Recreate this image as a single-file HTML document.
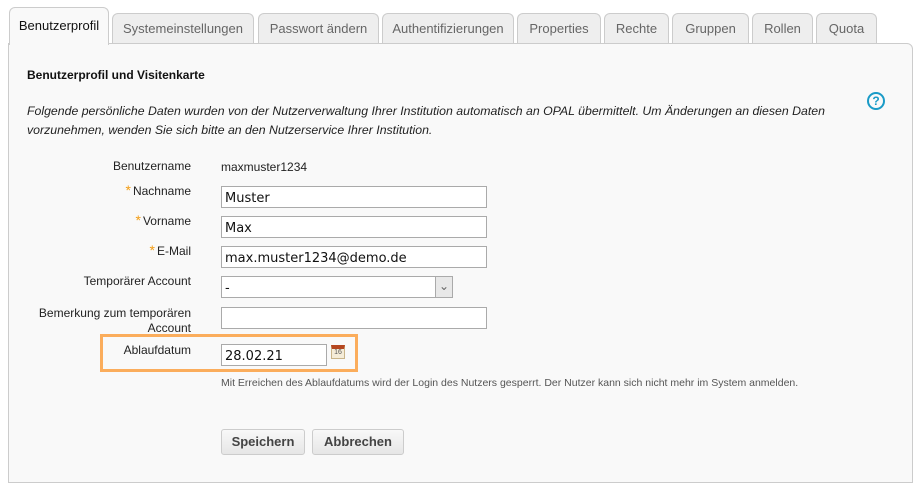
<!DOCTYPE html>
<html><head><meta charset="utf-8"><style>
body{margin:0;width:919px;height:468px;background:#fff;font-family:"Liberation Sans",Arial,sans-serif;font-size:12px;color:#222;position:relative;overflow:hidden}
.a{position:absolute}
.tab{position:absolute;top:13px;height:30px;background:#eee;border:1px solid #ccc;border-bottom:none;border-radius:6px 6px 0 0;color:#666;font-size:13px;line-height:30px;text-align:center;box-sizing:border-box}
.panel{position:absolute;left:8px;top:43px;width:905px;height:440px;background:#f9f9f9;border:1px solid #ccc;border-radius:0 6px 0 0;box-sizing:border-box}
.lbl{position:absolute;right:728px;text-align:right;font-size:12px;color:#222}
.inp{position:absolute;left:221px;width:266px;height:22px;background:#fff;border:1px solid #aaa;box-sizing:border-box;font-family:"DejaVu Sans",Verdana,sans-serif;font-size:13px;line-height:23px;padding-left:3px;color:#111}
.st{color:#f39c12;font-size:14px;margin-right:2px}
.btn{position:absolute;top:429px;height:26px;border:1px solid #ccc;border-radius:3px;background:linear-gradient(#f8f8f8,#e6e6e6);font-weight:bold;font-size:13px;color:#444;line-height:24px;text-align:center;box-sizing:border-box}
</style></head><body>
<div class="panel"></div>
<div class="tab" style="left:9px;top:7px;width:100px;height:38px;background:#f9f9f9;color:#111;line-height:36px;z-index:2">Benutzerprofil</div>
<div class="tab" style="left:112px;width:142px">Systemeinstellungen</div>
<div class="tab" style="left:258px;width:121px">Passwort ändern</div>
<div class="tab" style="left:382px;width:132px">Authentifizierungen</div>
<div class="tab" style="left:517px;width:84px">Properties</div>
<div class="tab" style="left:604px;width:65px">Rechte</div>
<div class="tab" style="left:672px;width:77px">Gruppen</div>
<div class="tab" style="left:752px;width:61px">Rollen</div>
<div class="tab" style="left:816px;width:61px">Quota</div>
<div class="a" style="left:27px;top:68px;font-weight:bold;font-size:12px;color:#111">Benutzerprofil und Visitenkarte</div>
<div class="a" style="left:867px;top:92px;width:14px;height:14px;border:2px solid #1a9bc7;border-radius:50%;color:#1a9bc7;font-weight:bold;font-size:12px;line-height:14px;text-align:center">?</div>
<div class="a" style="left:27px;top:102px;font-style:italic;font-size:12.3px;line-height:19px;color:#222;width:840px">Folgende persönliche Daten wurden von der Nutzerverwaltung Ihrer Institution automatisch an OPAL übermittelt. Um Änderungen an diesen Daten vorzunehmen, wenden Sie sich bitte an den Nutzerservice Ihrer Institution.</div>
<div class="lbl" style="top:159px">Benutzername</div>
<div class="a" style="left:221px;top:160px;font-size:12px">maxmuster1234</div>
<div class="lbl" style="top:182px"><span class="st">*</span>Nachname</div>
<div class="inp" style="top:186px">Muster</div>
<div class="lbl" style="top:212px"><span class="st">*</span>Vorname</div>
<div class="inp" style="top:216px">Max</div>
<div class="lbl" style="top:242px"><span class="st">*</span>E-Mail</div>
<div class="inp" style="top:246px">max.muster1234@demo.de</div>
<div class="lbl" style="top:274px">Temporärer Account</div>
<div class="inp" style="top:276px;width:232px">-<div class="a" style="right:0;top:0;width:16px;height:20px;background:#e8e8e8;border-left:1px solid #aaa;color:#666;font-size:12px;text-align:center;line-height:18px">&#8964;</div></div>
<div class="lbl" style="top:306px;line-height:15px">Bemerkung zum temporären<br>Account</div>
<div class="inp" style="top:307px"></div>
<div class="a" style="left:100px;top:334px;width:258px;height:38px;border:3px solid #fbad5c;box-sizing:border-box"></div>
<div class="lbl" style="top:343px">Ablaufdatum</div>
<div class="inp" style="top:344px;width:106px">28.02.21</div>
<div class="a" style="left:331px;top:345px;width:14px;height:14px;background:#f5ecd8;border:1px solid #c9b48a;border-top:4px solid #b5461f;box-sizing:border-box;font-size:7px;text-align:center;line-height:8px;color:#555">16</div>
<div class="a" style="left:221px;top:377px;font-size:10.5px;color:#555">Mit Erreichen des Ablaufdatums wird der Login des Nutzers gesperrt. Der Nutzer kann sich nicht mehr im System anmelden.</div>
<div class="btn" style="left:221px;width:84px">Speichern</div>
<div class="btn" style="left:312px;width:92px">Abbrechen</div>
</body></html>
